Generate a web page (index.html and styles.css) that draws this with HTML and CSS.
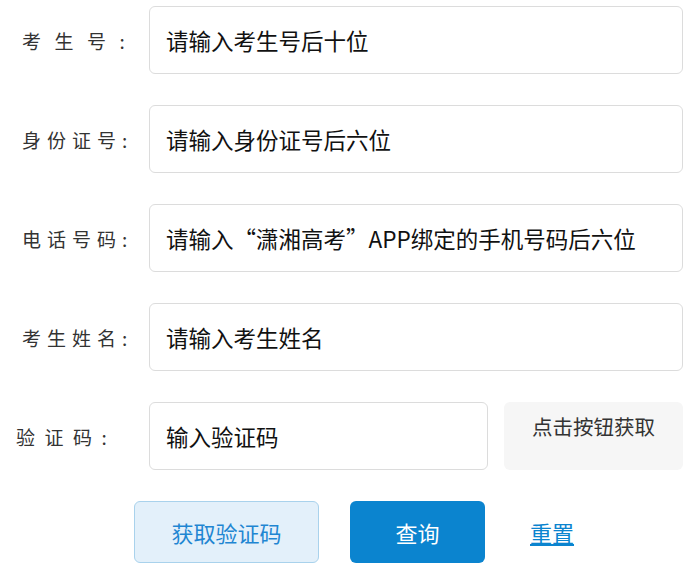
FILE: index.html
```html
<!DOCTYPE html>
<html lang="zh-CN">
<head>
  <meta charset="UTF-8" />
  <meta name="viewport" content="width=device-width, initial-scale=1.0" />
  <title>成绩查询</title>
  <link rel="stylesheet" href="styles.css">
</head>
<body>
  <form class="query" onsubmit="event.preventDefault()">
    <div class="row">
      <label class="wide" for="ksh">考生号:</label>
      <input type="text" id="ksh" placeholder="请输入考生号后十位" />
    </div>
    <div class="row">
      <label for="sfzh">身份证号:</label>
      <input type="text" id="sfzh" placeholder="请输入身份证号后六位" />
    </div>
    <div class="row">
      <label for="dhhm">电话号码:</label>
      <input type="text" id="dhhm" placeholder="请输入“潇湘高考”APP绑定的手机号码后六位" />
    </div>
    <div class="row">
      <label for="xm">考生姓名:</label>
      <input type="text" id="xm" placeholder="请输入考生姓名" />
    </div>
    <div class="row">
      <label class="code" for="yzm">验证码:</label>
      <input type="text" id="yzm" class="short" placeholder="输入验证码" />
      <div class="code-box">点击按钮获取</div>
    </div>
    <div class="actions">
      <button type="button" class="get-code">获取验证码</button>
      <button type="submit" class="submit">查询</button>
      <a href="#" class="reset">重置</a>
    </div>
  </form>
</body>
</html>
```

FILE: styles.css
```css
body {
  font-family: "Noto Sans CJK SC", "Microsoft YaHei", sans-serif;
  background-color: #ffffff;
  margin: 0;
  padding: 0;
}
.query {
  padding: 6px 16px 0 0;
}
.row {
  display: flex;
  align-items: center;
  height: 68px;
  margin-bottom: 31px;
}
label {
  width: 127px;
  padding-left: 22px;
  flex-shrink: 0;
  white-space: nowrap;
  overflow: hidden;
  font-size: 19px;
  letter-spacing: 6px;
  color: #333;
}
label.wide {
  letter-spacing: 13.5px;
}
label.code {
  padding-left: 16px;
  width: 133px;
  letter-spacing: 9.5px;
}
input {
  flex: 1;
  height: 68px;
  box-sizing: border-box;
  border: 1px solid #dcdcdc;
  border-radius: 6px;
  padding: 0 16px;
  font-family: inherit;
  font-size: 22.5px;
  color: #111;
  outline: none;
}
input::placeholder {
  color: #111;
}
input.short {
  flex: none;
  width: 339px;
}
.code-box {
  margin-left: 16px;
  flex: 1;
  height: 68px;
  box-sizing: border-box;
  padding-top: 9px;
  background-color: #f6f6f6;
  border-radius: 6px;
  text-align: center;
  font-size: 20.5px;
  color: #333;
}
.actions {
  display: flex;
  align-items: center;
  padding-left: 134px;
}
button {
  height: 62px;
  font-family: inherit;
  font-size: 22px;
  border-radius: 6px;
  cursor: pointer;
}
.get-code {
  width: 185px;
  background-color: #e3f0fa;
  border: 1px solid #a9d2ec;
  color: #1f86d2;
}
.submit {
  width: 135px;
  margin-left: 31px;
  background-color: #0b84cf;
  border: none;
  color: #ffffff;
}
.reset {
  margin-left: 45px;
  font-size: 22px;
  color: #0b84cf;
}
```
